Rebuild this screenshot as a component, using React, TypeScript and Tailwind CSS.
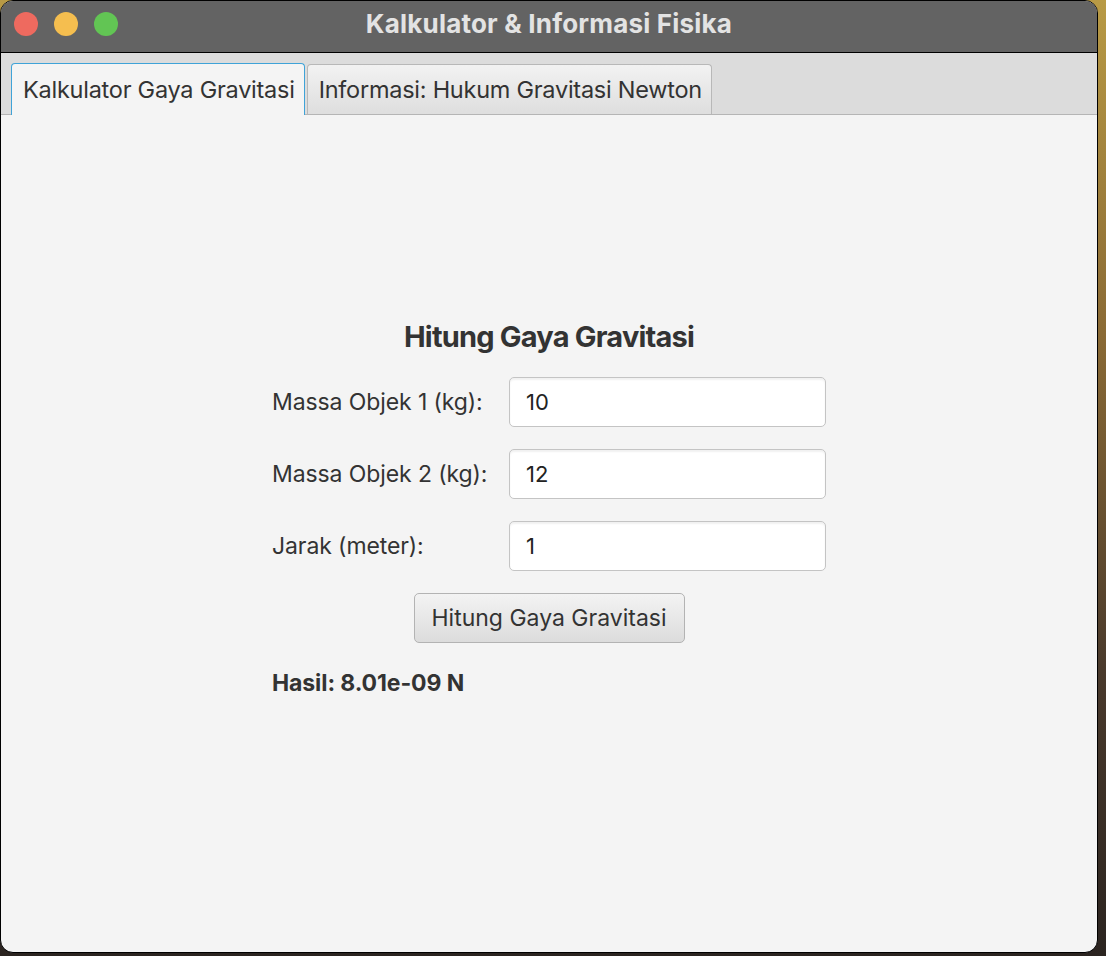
import React from "react";

const font = { fontFamily: "Inter, 'Noto Sans', sans-serif" };

function Field({ label, value }: { label: string; value: string }) {
  return (
    <div className="flex items-center">
      <label className="w-[237px] text-[23px] tracking-[-0.1px] text-[#333]">{label}</label>
      <div className="flex h-[50px] w-[317px] items-center rounded-[5px] border border-[#c4c4c4] bg-white px-4 text-[22px] text-[#222] shadow-[inset_0_2px_2px_rgba(0,0,0,0.06)]">
        {value}
      </div>
    </div>
  );
}

export default function App() {
  return (
    <div
      className="relative h-[956px] w-[1106px] overflow-hidden bg-[linear-gradient(180deg,#b89a45_0%,#8a6a35_35%,#4a3a2c_70%,#2b2420_100%)]"
      style={font}
    >
      <div className="flex h-[953px] w-[1098px] flex-col overflow-hidden rounded-[13px] border border-black bg-[#f4f4f4]">
        {/* title bar */}
        <div className="relative flex h-[52px] shrink-0 items-center border-b border-black bg-[#636363]">
          <div className="flex items-center gap-4 pb-[5px] pl-[13px]">
            <span className="h-[24px] w-[24px] rounded-full bg-[#ee6a5f]" />
            <span className="h-[24px] w-[24px] rounded-full bg-[#f5be4f]" />
            <span className="h-[24px] w-[24px] rounded-full bg-[#62c554]" />
          </div>
          <div className="absolute inset-0 flex items-center justify-center pb-[7px] text-[26px] font-bold tracking-[0.2px] text-[#e3e3e3]">
            Kalkulator &amp; Informasi Fisika
          </div>
        </div>

        {/* tab strip */}
        <div className="flex h-[62px] shrink-0 items-end gap-[2px] border-b border-[#b5b5b5] bg-[#dcdcdc] pl-[10px]">
          <div className="-mb-px flex h-[52px] items-center rounded-t-[4px] border border-b-0 border-[#3fa3d8] bg-[#f4f4f4] pr-[9px] pl-[11px] text-[23.5px] tracking-[-0.25px] text-[#333]">
            Kalkulator Gaya Gravitasi
          </div>
          <div className="flex h-[50px] items-center rounded-t-[4px] border border-b-0 border-[#b8b8b8] bg-[linear-gradient(180deg,#f2f2f2,#dedede)] pr-[9px] pl-[11px] text-[23.5px] tracking-[-0.25px] text-[#333]">
            Informasi: Hukum Gravitasi Newton
          </div>
        </div>

        {/* content */}
        <div className="flex flex-1 flex-col items-center pt-[205px]">
          <h1 className="text-[29px] leading-[34px] font-bold tracking-[-0.8px] text-[#333]">
            Hitung Gaya Gravitasi
          </h1>
          <div className="mt-[23px] flex flex-col gap-[22px]">
            <Field label="Massa Objek 1 (kg):" value="10" />
            <Field label="Massa Objek 2 (kg):" value="12" />
            <Field label="Jarak (meter):" value="1" />
            <div className="flex justify-center">
              <button className="h-[50px] w-[271px] rounded-[5px] border border-[#b3b3b3] bg-[linear-gradient(180deg,#f3f3f3,#dcdcdc)] text-[23px] text-[#333]">
                Hitung Gaya Gravitasi
              </button>
            </div>
            <div className="mt-[4px] text-[23px] leading-[28px] font-bold tracking-[-0.1px] text-[#333]">
              Hasil: 8.01e-09 N
            </div>
          </div>
        </div>
      </div>
    </div>
  );
}
